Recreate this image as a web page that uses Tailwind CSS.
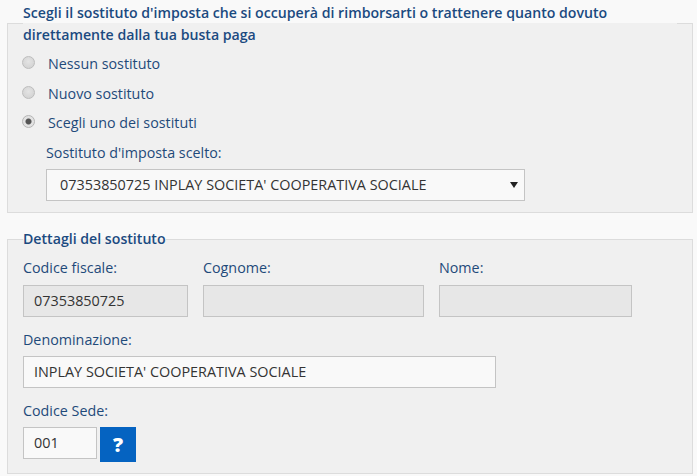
<!DOCTYPE html>
<html lang="it">
<head>
<meta charset="utf-8"/>
<title>Sostituto d'imposta</title>
<script src="https://cdn.jsdelivr.net/npm/@tailwindcss/browser@4"></script>
</head>
<body class="bg-[#f9f9f9] text-[#1f4a7a] font-['Open_Sans',sans-serif] text-[14.3px] leading-[20px] overflow-hidden">
<div class="pl-[7px] pr-[4px]">

  <fieldset class="border border-[#dcdcdc] bg-[#f0f0f0] px-[15px] pb-[11px] h-[213px]">
    <legend class="font-semibold text-[14.15px] text-[#1b4a80] leading-[22px] pt-[2px]">Scegli il sostituto d'imposta che si occuperà di rimborsarti o trattenere quanto dovuto direttamente dalla tua busta paga</legend>
    <div class="flex flex-col mt-[1px]">
      <label class="flex items-center h-[30px]">
        <input type="radio" name="sost" class="appearance-none w-[13px] h-[13px] ml-[-1px] rounded-full border border-[#bdbdbd] bg-[radial-gradient(circle_at_50%_40%,#e4e4e4,#cfcfcf)]"/>
        <span class="ml-[13px] pt-[3px]">Nessun sostituto</span>
      </label>
      <label class="flex items-center h-[30px]">
        <input type="radio" name="sost" class="appearance-none w-[13px] h-[13px] ml-[-1px] rounded-full border border-[#bdbdbd] bg-[radial-gradient(circle_at_50%_40%,#e4e4e4,#cfcfcf)]"/>
        <span class="ml-[13px] pt-[3px]">Nuovo sostituto</span>
      </label>
      <label class="flex items-center h-[29px]">
        <input type="radio" name="sost" checked class="appearance-none w-[13px] h-[13px] ml-[-1px] rounded-full border border-[#b5b5b5] bg-[radial-gradient(circle,#555_0,#555_2.5px,#e2e2e2_3.5px)]"/>
        <span class="ml-[13px] pt-[2px]">Scegli uno dei sostituti</span>
      </label>
    </div>
    <div class="ml-[23px] mt-[7px]">
      <label class="block mb-[6px]">Sostituto d'imposta scelto:</label>
      <div class="relative w-[479px] h-[32px] border border-[#c4c4c4] bg-[#f9f9f9] text-[#333] text-[14.4px] pl-[13px] flex items-center">
        07353850725 INPLAY SOCIETA' COOPERATIVA SOCIALE
        <span class="absolute right-[6px] top-[12px] w-0 h-0 border-x-[4px] border-x-transparent border-t-[6px] border-t-[#222]"></span>
      </div>
    </div>
  </fieldset>

  <fieldset class="mt-[15px] border border-[#dcdcdc] bg-[#f0f0f0] px-[15px] h-[246px]">
    <legend class="font-semibold text-[14.15px] text-[#1b4a80] leading-[22px]">Dettagli del sostituto</legend>
    <div class="flex gap-[15px] mt-[8px]">
      <div class="w-[165px]">
        <label class="block mb-[7px]">Codice fiscale:</label>
        <div class="h-[32px] border border-[#c4c4c4] bg-[#e7e7e7] text-[#333] text-[14.4px] pl-[10px] flex items-center">07353850725</div>
      </div>
      <div class="w-[221px]">
        <label class="block mb-[7px]">Cognome:</label>
        <div class="h-[32px] border border-[#c4c4c4] bg-[#e7e7e7]"></div>
      </div>
      <div class="w-[193px]">
        <label class="block mb-[7px]">Nome:</label>
        <div class="h-[32px] border border-[#c4c4c4] bg-[#e7e7e7]"></div>
      </div>
    </div>
    <div class="mt-[13px]">
      <label class="block mb-[6px]">Denominazione:</label>
      <div class="w-[473px] h-[32px] border border-[#c4c4c4] bg-[#f9f9f9] text-[#333] text-[14.4px] pl-[10px] flex items-center">INPLAY SOCIETA' COOPERATIVA SOCIALE</div>
    </div>
    <div class="mt-[13px]">
      <label class="block mb-[6px]">Codice Sede:</label>
      <div class="flex items-start gap-[3px]">
        <div class="w-[74px] h-[32px] border border-[#c4c4c4] bg-[#f9f9f9] text-[#333] text-[14.4px] pl-[10px] flex items-center">001</div>
        <button class="w-[36px] h-[35px] bg-[#0563c1] text-white font-extrabold text-[20px] flex items-center justify-center">?</button>
      </div>
    </div>
  </fieldset>

</div>
</body>
</html>
